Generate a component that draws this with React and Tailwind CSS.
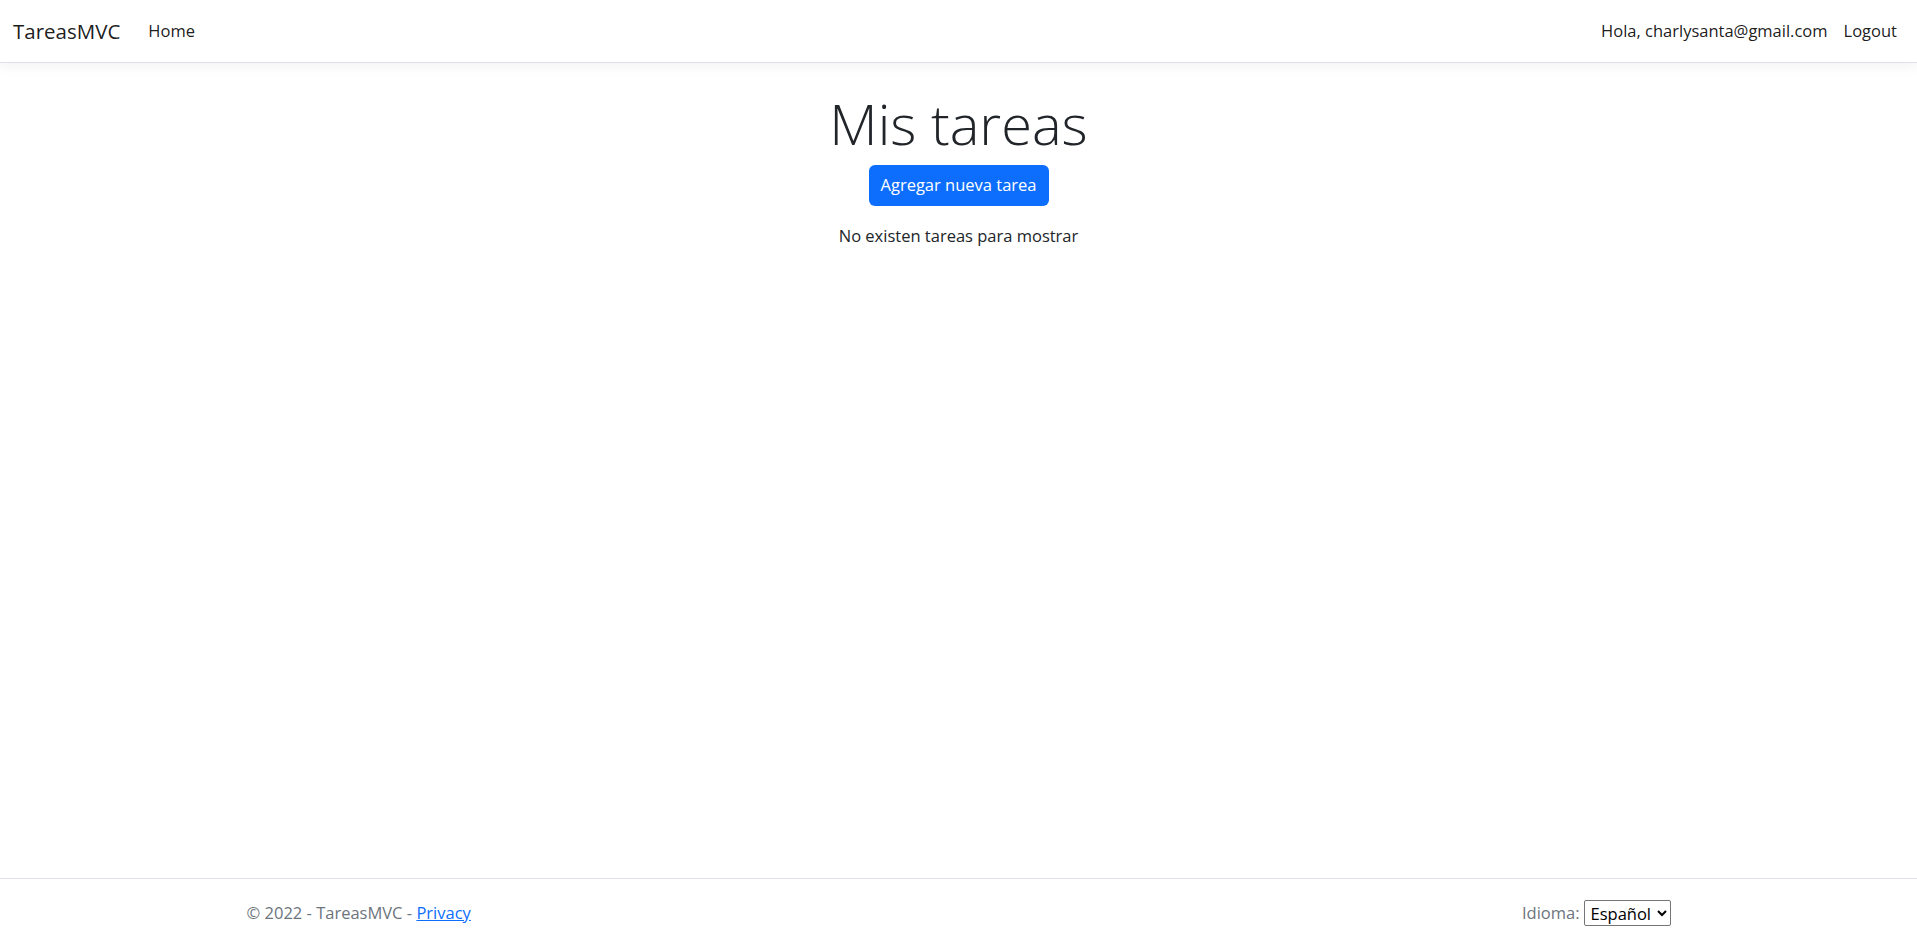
export default function App() {
  return (
    <div className="min-h-screen flex flex-col bg-white text-[#212529]" style={{ fontFamily: '"Open Sans", Lato, sans-serif' }}>
      {/* Navbar */}
      <header className="h-[63px] border-b border-[#dee2e6] shadow-[0_4px_12px_rgba(0,0,0,0.05)] bg-white">
        <nav className="h-full flex items-center justify-between px-3">
          <div className="flex items-center">
            <span className="text-[20.5px] text-black/90 mr-[20px] pl-[1px]">TareasMVC</span>
            <a className="text-[16.5px] text-black/90 px-2">Home</a>
          </div>
          <div className="flex items-center">
            <span className="text-[16.5px] text-black/90 px-2">Hola, charlysanta@gmail.com</span>
            <a className="text-[16.5px] text-black/90 px-2">Logout</a>
          </div>
        </nav>
      </header>

      {/* Main */}
      <main className="flex-1 flex flex-col items-center pt-[27px]">
        <h1 className="text-[56px] font-light leading-[1.2]">Mis tareas</h1>
        <button className="mt-[8px] h-[41px] px-3 rounded-md bg-[#0d6efd] text-white text-[16.5px]">
          Agregar nueva tarea
        </button>
        <p className="mt-[18px] text-[16.5px]">No existen tareas para mostrar</p>
      </main>

      {/* Footer */}
      <footer className="h-[65px] border-t border-[#dee2e6] text-[#6c757d]">
        <div className="h-full mx-auto w-[1424px] flex items-center justify-between pt-[4px]">
          <div className="text-[16.5px]">
            © 2022 - TareasMVC - <a className="text-[#0d6efd] underline">Privacy</a>
          </div>
          <div className="flex items-center text-[16.5px]">
            <span className="mr-[4px]">Idioma:</span>
            <select className="h-[26px] border border-[#767676] rounded-[2px] text-black px-[2px] text-[16.5px]">
              <option>Español</option>
              <option>English</option>
            </select>
          </div>
        </div>
      </footer>
    </div>
  );
}
